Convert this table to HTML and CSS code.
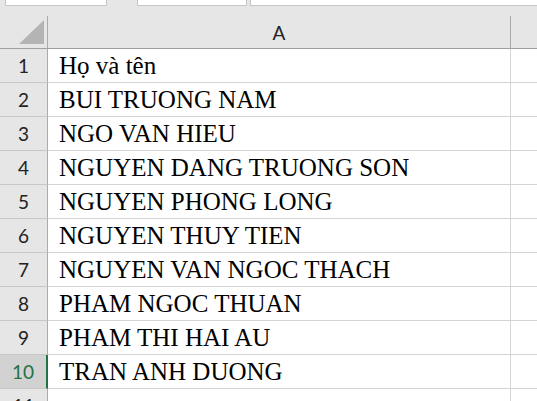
FILE: index.html
```html
<!DOCTYPE html>
<html lang="vi">
<head>
<meta charset="utf-8">
<title>Sheet</title>
<link rel="stylesheet" href="styles.css">
</head>
<body>
<div class="screen">
  <div class="tabs">
    <div class="tab tab-1"></div>
    <div class="tab tab-2"></div>
    <div class="tab tab-3"></div>
  </div>
  <div class="sheet">
    <div class="row head-row">
      <div class="corner"><div class="tri"></div></div>
      <div class="col-head col-a">A</div>
      <div class="col-head col-b"></div>
    </div>
    <div class="row"><div class="rh">1</div><div class="cell col-a">Họ và tên</div><div class="cell col-b"></div></div>
    <div class="row"><div class="rh">2</div><div class="cell col-a">BUI TRUONG NAM</div><div class="cell col-b"></div></div>
    <div class="row"><div class="rh">3</div><div class="cell col-a">NGO VAN HIEU</div><div class="cell col-b"></div></div>
    <div class="row"><div class="rh">4</div><div class="cell col-a">NGUYEN DANG TRUONG SON</div><div class="cell col-b"></div></div>
    <div class="row"><div class="rh">5</div><div class="cell col-a">NGUYEN PHONG LONG</div><div class="cell col-b"></div></div>
    <div class="row"><div class="rh">6</div><div class="cell col-a">NGUYEN THUY TIEN</div><div class="cell col-b"></div></div>
    <div class="row"><div class="rh">7</div><div class="cell col-a">NGUYEN VAN NGOC THACH</div><div class="cell col-b"></div></div>
    <div class="row"><div class="rh">8</div><div class="cell col-a">PHAM NGOC THUAN</div><div class="cell col-b"></div></div>
    <div class="row"><div class="rh">9</div><div class="cell col-a">PHAM THI HAI AU</div><div class="cell col-b"></div></div>
    <div class="row"><div class="rh rh-sel">10</div><div class="cell col-a">TRAN ANH DUONG</div><div class="cell col-b"></div></div>
    <div class="row"><div class="rh">11</div><div class="cell col-a"></div><div class="cell col-b"></div></div>
  </div>
</div>
</body>
</html>
```

FILE: styles.css
```css
body {
  margin: 0;
  background: #e6e6e6;
  font: 25px "Liberation Serif", serif;
}
.screen {
  width: 537px;
  height: 401px;
  overflow: hidden;
  background: #e6e6e6;
}
.tabs {
  display: flex;
  height: 6px;
}
.tab {
  box-sizing: border-box;
  height: 6px;
  background: #ffffff;
  border: 1px solid #c6c6c6;
  border-top: none;
}
.tab-1 { margin-left: 5px; width: 102px; }
.tab-2 { margin-left: 30px; width: 110px; }
.tab-3 { margin-left: 3px; flex: 1; border-right: none; }

.sheet {
  margin-top: 10px;
}
.row {
  display: flex;
  height: 34px;
}
.head-row {
  height: 33px;
}
.corner {
  box-sizing: border-box;
  width: 48px;
  height: 33px;
  border-right: 1px solid #ababab;
  border-bottom: 1px solid #9f9f9f;
  position: relative;
}
.tri {
  position: absolute;
  left: 19px;
  top: 4px;
  width: 0;
  height: 0;
  border-style: solid;
  border-width: 0 0 24px 25px;
  border-color: transparent transparent #b4b4b4 transparent;
}
.col-head {
  box-sizing: border-box;
  height: 33px;
  border-bottom: 1px solid #9f9f9f;
  font: 19px/34px Lato, sans-serif;
  color: #222;
  text-align: center;
}
.col-a { width: 463px; border-right: 1px solid #ababab; }
.col-b { flex: 1; }

.rh {
  box-sizing: border-box;
  width: 48px;
  height: 34px;
  border-right: 1px solid #ababab;
  border-bottom: 1px solid #c8c8c8;
  font: 19px/34px Lato, sans-serif;
  color: #222;
  text-align: center;
}
.rh-sel {
  background: #d2d2d2;
  color: #217346;
  border-right: 2px solid #217346;
}
.cell {
  box-sizing: border-box;
  height: 34px;
  border-bottom: 1px solid #d4d4d4;
  background: #ffffff;
  padding-left: 11px;
  font: 25px/33px "Liberation Serif", serif;
  color: #000;
  white-space: nowrap;
}
.cell.col-a { border-right: 1px solid #d4d4d4; }
```
